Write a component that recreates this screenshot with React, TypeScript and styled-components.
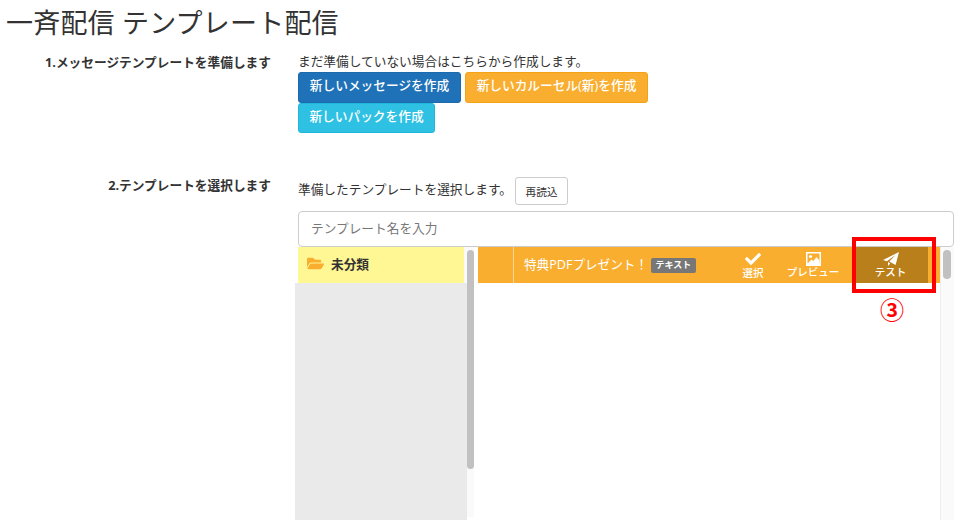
import React from 'react';
import styled, { createGlobalStyle } from 'styled-components';
import { FaCheck, FaFolderOpen } from 'react-icons/fa';

const GlobalStyle = createGlobalStyle`
  html, body { margin: 0; padding: 0; background: #fff; overflow: hidden; }
  body { font-family: "Open Sans", "Noto Sans CJK JP", "Liberation Sans", sans-serif; color: #333; }
  * { box-sizing: border-box; }
`;

const Page = styled.div`
  width: 964px;
  height: 528px;
  padding: 0 10px 0 6px;
`;

const Title = styled.h1`
  margin: 0;
  height: 46px;
  font-size: 27px;
  line-height: 45px;
  font-weight: 400;
  letter-spacing: 0.2px;
  white-space: nowrap;
`;

const FormRow = styled.div`
  display: grid;
  grid-template-columns: 265px 1fr;
  column-gap: 27px;
`;

const Label = styled.div`
  font-size: 12.7px;
  font-weight: 700;
  line-height: 16px;
  text-align: right;
`;

const Help = styled.div`
  height: 18px;
  font-size: 12.7px;
  line-height: 14px;
  white-space: nowrap;
`;

const ButtonGroup = styled.div`
  display: flex;
  flex-wrap: wrap;
  column-gap: 4px;
  width: 400px;
`;

const ActionButton = styled.button<{ $bg: string; $border: string; $w: number; $h: number }>`
  width: ${(p) => p.$w}px;
  height: ${(p) => p.$h}px;
  padding: 0 0 6px;
  border: 1px solid ${(p) => p.$border};
  border-radius: 3px;
  background: ${(p) => p.$bg};
  color: #fff;
  font-family: inherit;
  font-size: 12.7px;
  font-weight: 500;
  white-space: nowrap;
`;

const FirstRow = styled(FormRow)`
  height: 131px;
  padding-top: 8px;
`;

const ReloadLine = styled.div`
  display: flex;
  align-items: center;
  gap: 3px;
  height: 28px;
`;

const ReloadButton = styled.button`
  width: 53px;
  height: 28px;
  padding: 0;
  border: 1px solid #ccc;
  border-radius: 3px;
  background: #fff;
  color: #333;
  font-family: inherit;
  font-size: 10.7px;
`;

const SearchInput = styled.input`
  display: block;
  width: 656px;
  height: 36px;
  margin-top: 6px;
  padding: 0 12px 2px;
  border: 1px solid #ccc;
  border-radius: 4px;
  font-family: inherit;
  font-size: 12.7px;
  &::placeholder { color: #777; opacity: 1; }
`;

const Panel = styled.div`
  position: relative;
  display: flex;
  width: 656px;
  height: 273px;
`;

const FolderColumn = styled.div`
  position: relative;
  width: 176px;
  flex: none;
`;

const FolderRow = styled.div`
  display: flex;
  align-items: center;
  gap: 7px;
  width: 166px;
  height: 36px;
  padding: 0 0 3px 9px;
  background: #fff694;
  font-size: 12.7px;
  font-weight: 700;
  color: #333;
  svg { color: #f9ae2f; font-size: 17px; }
`;

const FolderEmpty = styled.div`
  position: relative;
  z-index: 1;
  width: 172px;
  height: 237px;
  margin-left: -3px;
  background: #eaeaea;
`;

const ScrollTrack = styled.div<{ $w: number }>`
  position: absolute;
  top: 0;
  width: ${(p) => p.$w}px;
  background: #fafafa;
  overflow: hidden;
`;

const LeftTrack = styled(ScrollTrack)`
  left: 166px;
  bottom: 3px;
`;

const RightTrack = styled(ScrollTrack)`
  right: 0;
  bottom: 0;
  border-left: 1px solid #eee;
`;

const ScrollThumb = styled.div<{ $h: number; $w: number; $left: number }>`
  position: relative;
  z-index: 2;
  width: ${(p) => p.$w}px;
  height: ${(p) => p.$h}px;
  margin: 3px 0 0 ${(p) => p.$left}px;
  border-radius: 4px;
  background: #c1c1c1;
`;

const TemplateColumn = styled.div`
  flex: none;
  width: 466px;
  margin-left: 4px;
`;

const TemplateRow = styled.div`
  display: flex;
  align-items: stretch;
  height: 36px;
  width: 462px;
  background: #f9ae2f;
  color: #fff;
`;

const Handle = styled.div`
  width: 36px;
  border-right: 1px solid #fbd697;
`;

const TemplateName = styled.div`
  display: flex;
  align-items: center;
  gap: 3px;
  width: 219px;
  padding: 0 0 4px 10px;
  font-size: 12.6px;
  font-weight: 400;
  white-space: nowrap;
`;

const TypeBadge = styled.span`
  display: inline-block;
  width: 45px;
  height: 15px;
  margin-top: 4px;
  border-radius: 2px;
  background: #777;
  color: #fff;
  font-size: 9px;
  font-weight: 700;
  line-height: 14px;
  text-align: center;
`;

const RowAction = styled.div<{ $w: number; $active?: boolean }>`
  display: flex;
  flex-direction: column;
  align-items: center;
  justify-content: center;
  width: ${(p) => p.$w}px;
  padding-bottom: 1px;
  background: ${(p) => (p.$active ? '#b97f1b' : 'transparent')};
  font-size: 10.5px;
  font-weight: 500;
  line-height: 12px;
  white-space: nowrap;
  svg { display: block; }
`;

const Highlight = styled.div`
  position: absolute;
  left: 554px;
  top: -10px;
  width: 84px;
  height: 56px;
  border: 4px solid #f00;
`;

const Marker = styled.div`
  position: absolute;
  left: 582px;
  top: 49px;
  color: #f00;
  font-size: 24px;
  font-weight: 700;
  line-height: 28px;
`;

const ImageIcon = () => (
  <svg width="15" height="14" viewBox="0 0 15 14" fill="#fff">
    <path fillRule="evenodd" d="M0 0h15v14H0zM1.5 1.5v9.5h12V1.5z" />
    <circle cx="4.5" cy="4.5" r="1.6" />
    <path d="M2 11l3.5-3.5 2 1.5 3-4 3 3.5V11z" />
  </svg>
);

const SendIcon = () => (
  <svg width="16" height="14" viewBox="0 0 16 14" fill="#fff">
    <path d="M16 0L0 8l3.9 1.2L12.5 3 6.3 9.5 12.6 13z" />
    <path d="M5 10v4l2.2-2.6z" />
  </svg>
);

export default function App() {
  return (
    <Page>
      <GlobalStyle />
      <Title>一斉配信 テンプレート配信</Title>
      <FirstRow>
        <Label>1.メッセージテンプレートを準備します</Label>
        <div>
          <Help>まだ準備していない場合はこちらから作成します。</Help>
          <ButtonGroup>
            <ActionButton $bg="#1f72b8" $border="#1b6aab" $w={163} $h={31}>新しいメッセージを作成</ActionButton>
            <ActionButton $bg="#f9ae2f" $border="#f5a316" $w={183} $h={31}>新しいカルーセル(新)を作成</ActionButton>
            <ActionButton $bg="#2fc1e3" $border="#1fb8dc" $w={137} $h={30}>新しいパックを作成</ActionButton>
          </ButtonGroup>
        </div>
      </FirstRow>
      <FormRow>
        <Label>2.テンプレートを選択します</Label>
        <div>
          <ReloadLine>
            <Help>準備したテンプレートを選択します。</Help>
            <ReloadButton>再読込</ReloadButton>
          </ReloadLine>
          <SearchInput placeholder="テンプレート名を入力" />
          <Panel>
            <FolderColumn>
              <FolderRow>
                <FaFolderOpen />
                未分類
              </FolderRow>
              <FolderEmpty />
              <LeftTrack $w={10}>
                <ScrollThumb $w={7} $h={219} $left={3} />
              </LeftTrack>
            </FolderColumn>
            <TemplateColumn>
              <TemplateRow>
                <Handle />
                <TemplateName>
                  特典PDFプレゼント！
                  <TypeBadge>テキスト</TypeBadge>
                </TemplateName>
                <RowAction $w={40}>
                  <FaCheck size={16} />
                  選択
                </RowAction>
                <RowAction $w={80}>
                  <ImageIcon />
                  プレビュー
                </RowAction>
                <RowAction $w={75} $active>
                  <SendIcon />
                  テスト
                </RowAction>
              </TemplateRow>
            </TemplateColumn>
            <RightTrack $w={14}>
              <ScrollThumb $w={8} $h={29} $left={2} />
            </RightTrack>
            <Highlight />
            <Marker>③</Marker>
          </Panel>
        </div>
      </FormRow>
    </Page>
  );
}
